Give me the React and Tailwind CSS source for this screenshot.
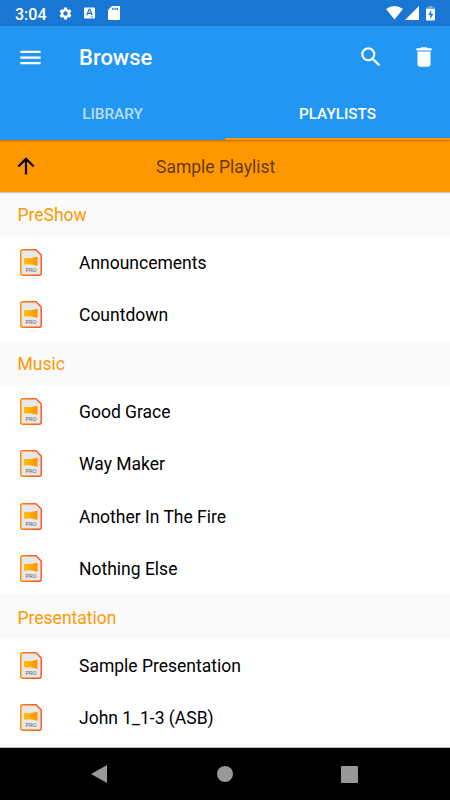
import React from "react";
import { MdSettings, MdSearch, MdDelete, MdMenu } from "react-icons/md";

const sections = [
  { title: "PreShow", items: ["Announcements", "Countdown"] },
  {
    title: "Music",
    items: ["Good Grace", "Way Maker", "Another In The Fire", "Nothing Else"],
  },
  { title: "Presentation", items: ["Sample Presentation", "John 1_1-3 (ASB)"] },
];

function StatusBar() {
  return (
    <div className="flex h-[26px] shrink-0 items-center bg-[#1976d2] pr-[15px] pl-[15px] text-white">
      <span className="w-[43px] pt-[3px] text-[16px] leading-none font-medium">3:04</span>
      <MdSettings className="size-[15px]" />
      {/* keyboard */}
      <svg viewBox="0 0 12 12" className="ml-[11px] h-[12px] w-[11px]">
        <rect width="12" height="12" rx="1" fill="#fff" />
        <path d="M3 8.5L5.6 2h.8L9 8.5M4 6.5h4" fill="none" stroke="#1976d2" strokeWidth="1.3" />
        <path d="M7 10.3h3" stroke="#1976d2" strokeWidth=".8" />
      </svg>
      {/* sd card */}
      <svg viewBox="0 0 12 14" className="ml-[13px] h-[14px] w-[12px]">
        <path d="M4 0h7q1 0 1 1v12q0 1-1 1H1q-1 0-1-1V4z" fill="#fff" />
        <path d="M4.9 1.7v2.4M7.1 1.7v2.4M9.3 1.7v2.4" stroke="#1976d2" strokeWidth="1.3" />
      </svg>
      <svg viewBox="0 0 17 14" className="ml-auto h-[14px] w-[17px]">
        <path d="M0 3Q8.5-3 17 3L8.5 13.5z" fill="#fff" />
      </svg>
      <svg viewBox="0 0 14 14" className="ml-[2px] h-[14px] w-[14px]">
        <path d="M14 0v14H0z" fill="#fff" />
      </svg>
      <svg viewBox="0 0 9 15" className="ml-[7px] h-[15px] w-[9px]">
        <path d="M2.5 0h4v1.5H9V3H0V1.5h2.5z" fill="#fff" fillOpacity=".4" />
        <path d="M0 3h9v10.5q0 1-1 1H1q-1 0-1-1z" fill="#fff" />
        <path d="M5.3 4L2.3 9h2v4l3-5h-2z" fill="#1976d2" />
      </svg>
    </div>
  );
}

function Header() {
  return (
    <div className="relative z-10 flex h-[114px] shrink-0 flex-col bg-[#2196f3] text-white shadow-[0_1px_2px_rgba(0,0,0,0.3)]">
      <div className="flex h-[62px] items-center pr-[13px] pl-[17px]">
        <MdMenu className="size-[27px]" />
        <h1 className="ml-[35px] pt-px text-[22px] font-medium">Browse</h1>
        <MdSearch className="ml-auto size-[26px]" />
        <MdDelete className="ml-[27px] size-[26px]" />
      </div>
      <div className="grid grid-cols-2 grid-rows-[52px] text-center text-[15.3px] leading-[53px] font-medium">
        <div className="text-white/70">LIBRARY</div>
        <div className="border-b-2 border-[#ff9800]">PLAYLISTS</div>
      </div>
    </div>
  );
}

function FileIcon() {
  return (
    <svg viewBox="0 0 22 27" className="h-[27px] w-[22px]">
      <defs>
        <linearGradient id="edge" x1="0" x2="1">
          <stop offset="0" stopColor="#ff8500" />
          <stop offset="1" stopColor="#ff4d1a" />
        </linearGradient>
        <linearGradient id="horn" x1="0" x2="1">
          <stop offset="0" stopColor="#ffc107" />
          <stop offset="1" stopColor="#ff9100" />
        </linearGradient>
      </defs>
      <path
        d="M2.8 .8H16l5.2 5.2v18.2q0 2-2 2H2.8q-2 0-2-2V2.8q0-2 2-2z"
        fill="#e8e8e8"
        stroke="url(#edge)"
        strokeWidth="1.4"
      />
      <path d="M4 9h4.5v6.500H4zM8.500 9.500L17.500 7.800v9L8.500 15z" fill="url(#horn)" />
      <text x="11" y="23.2" textAnchor="middle" fontSize="5.8" fill="#666">
        PRO
      </text>
    </svg>
  );
}

function Section({ title, items }) {
  return (
    <section>
      <h2 className="h-[44px] bg-[#fafafa] pl-[17.5px] text-[17.5px] leading-[46px] text-[#ff9800]">
        {title}
      </h2>
      {items.map((item) => (
        <div key={item} className="flex h-[52.5px] items-center bg-white pl-[20px]">
          <FileIcon />
          <span className="ml-[37px] pt-px text-[17.5px] text-black">{item}</span>
        </div>
      ))}
    </section>
  );
}

function NavBar() {
  return (
    <div className="flex h-[52px] shrink-0 items-center justify-between bg-black pr-[92px] pl-[91px]">
      <svg viewBox="0 0 16 18" className="h-[18px] w-[16px]">
        <path d="M16 0v18L0 9z" fill="#999" />
      </svg>
      <div className="ml-px size-[16px] rounded-full bg-[#999]" />
      <div className="size-[17px] rounded-[1px] bg-[#999]" />
    </div>
  );
}

export default function App() {
  return (
    <div className="flex h-[800px] w-[450px] flex-col overflow-hidden bg-[#fafafa] font-['Roboto',sans-serif]">
      <StatusBar />
      <Header />
      <div className="relative flex h-[52px] shrink-0 items-center bg-[#ff9800] pl-[17px] shadow-[0_1px_1px_rgba(0,0,0,0.2)]">
        <svg viewBox="0 0 18 18" className="size-[18px]">
          <path d="M9 17.5V2M1.3 9.5L9 1.8l7.700 7.700" fill="none" stroke="#000" strokeWidth="2.2" />
        </svg>
        <span className="ml-[121px] pt-[2px] text-[17.5px] text-black/65">Sample Playlist</span>
      </div>
      <div className="min-h-0 flex-1 overflow-hidden border-b border-[#bbb]">
        {sections.map((s) => (
          <Section key={s.title} title={s.title} items={s.items} />
        ))}
      </div>
      <NavBar />
    </div>
  );
}
